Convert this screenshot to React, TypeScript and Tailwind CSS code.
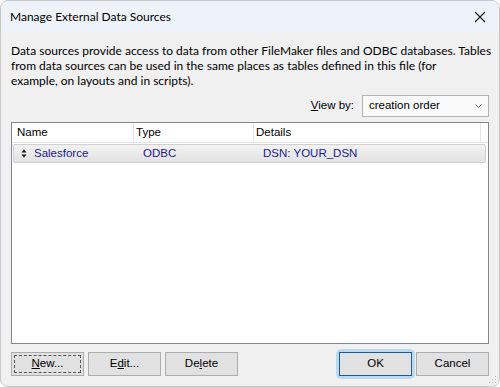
import React from "react";

export default function App() {
  const ui = { fontFamily: 'Lato, "Noto Sans", sans-serif' };
  const tah = { fontFamily: '"Liberation Sans", Arial, sans-serif' };
  return (
    <div className="w-[500px] h-[387px] bg-white">
      <div className="w-[500px] h-[387px] flex flex-col border border-[#c8c8c8] rounded-[8px] overflow-hidden bg-[#f0f0f0] relative">
        <div className="h-[31px] bg-[#eef3f9] flex items-center justify-between pl-[9px] pr-[12px] shrink-0">
          <span className="text-[12px] text-black" style={ui}>Manage External Data Sources</span>
          <svg width="12" height="12" viewBox="0 0 12 12" className="mr-[1px]">
            <path d="M1 1 L11 11 M11 1 L1 11" stroke="#1a1a1a" strokeWidth="1.1" />
          </svg>
        </div>
        <div className="flex flex-col px-[10px] pt-[11px] grow">
          <p className="text-[12px] leading-[15px] text-black whitespace-nowrap" style={ui}>
            Data sources provide access to data from other FileMaker files and ODBC databases. Tables
            <br />
            from data sources can be used in the same places as tables defined in this file (for
            <br />
            example, on layouts and in scripts).
          </p>
          <div className="flex justify-end items-center mt-[7px] h-[22px]">
            <span className="text-[11.5px] text-black mr-[8px]" style={tah}><span className="underline">V</span>iew by:</span>
            <div className="w-[127px] h-[22px] border border-[#b4b4b4] bg-[#fafafa] flex items-center justify-between pl-[6px] pr-[6px]">
              <span className="text-[11.5px] text-black" style={tah}>creation order</span>
              <svg width="7" height="5" viewBox="0 0 7 5"><path d="M0.5 0.5 L3.5 3.5 L6.5 0.5" fill="none" stroke="#555" strokeWidth="0.9" /></svg>
            </div>
          </div>
          <div className="mt-[5px] h-[222px] border border-[#828790] bg-white flex flex-col">
            <div className="h-[20px] flex text-[11.5px] text-black border-b border-[#e5e5e5] bg-white" style={tah}>
              <div className="w-[122px] pl-[5px] border-r border-[#e5e5e5] flex items-center">Name</div>
              <div className="w-[120px] pl-[2px] border-r border-[#e5e5e5] flex items-center">Type</div>
              <div className="w-[227px] pl-[2px] border-r border-[#e5e5e5] flex items-center">Details</div>
            </div>
            <div className="mx-[1px] mt-[1px] h-[19px] w-[473px] flex items-center text-[11.5px] text-[#1b1b8a] rounded-[2px] border border-[#d0d0d0] bg-gradient-to-b from-[#f2f2f2] to-[#e2e2e2]" style={tah}>
              <div className="w-[121px] flex items-center pl-[7px]">
                <svg width="6" height="9" viewBox="0 0 6 9" className="mr-[7px]">
                  <path d="M3 0.5 L5.5 3.5 L0.5 3.5 Z M3 8.5 L5.5 5.5 L0.5 5.5 Z" fill="#111" />
                </svg>
                <span>Salesforce</span>
              </div>
              <div className="w-[120px] pl-[8px]">ODBC</div>
              <div className="pl-[8px]">DSN: YOUR_DSN</div>
            </div>
          </div>
          <div className="flex items-center mt-[5px]">
            <button className="w-[73px] h-[24px] border border-[#adadad] bg-[#e1e1e1] p-[2px]">
              <div className="w-full h-full border border-dashed border-[#555] flex items-center justify-center text-[11.5px] text-black" style={tah}><span className="underline">N</span>ew...</div>
            </button>
            <button className="ml-[4px] w-[73px] h-[24px] border border-[#adadad] bg-[#e1e1e1] flex items-center justify-center text-[11.5px] text-black" style={tah}>
              E<span className="underline">d</span>it...
            </button>
            <button className="ml-[4px] w-[73px] h-[24px] border border-[#adadad] bg-[#e1e1e1] flex items-center justify-center text-[11.5px] text-black" style={tah}>
              De<span className="underline">l</span>ete
            </button>
            <div className="ml-auto rounded-[5px] bg-[#bcd9ee] p-[3px] mr-[1px]">
              <button className="w-[73px] h-[24px] border border-[#1a5c98] bg-[#e1e1e1] flex items-center justify-center text-[11.5px] text-black" style={tah}>
                OK
              </button>
            </div>
            <button className="w-[73px] h-[24px] border border-[#adadad] bg-[#e1e1e1] flex items-center justify-center text-[11.5px] text-black" style={tah}>
              Cancel
            </button>
          </div>
        </div>
        <svg width="10" height="10" viewBox="0 0 10 10" className="absolute right-[2px] bottom-[2px]">
          {[[8, 2], [8, 5], [5, 5], [8, 8], [5, 8], [2, 8]].map(([x, y], i) => (
            <rect key={i} x={x} y={y} width="1" height="1" fill="#b8b8b8" />
          ))}
        </svg>
      </div>
    </div>
  );
}
